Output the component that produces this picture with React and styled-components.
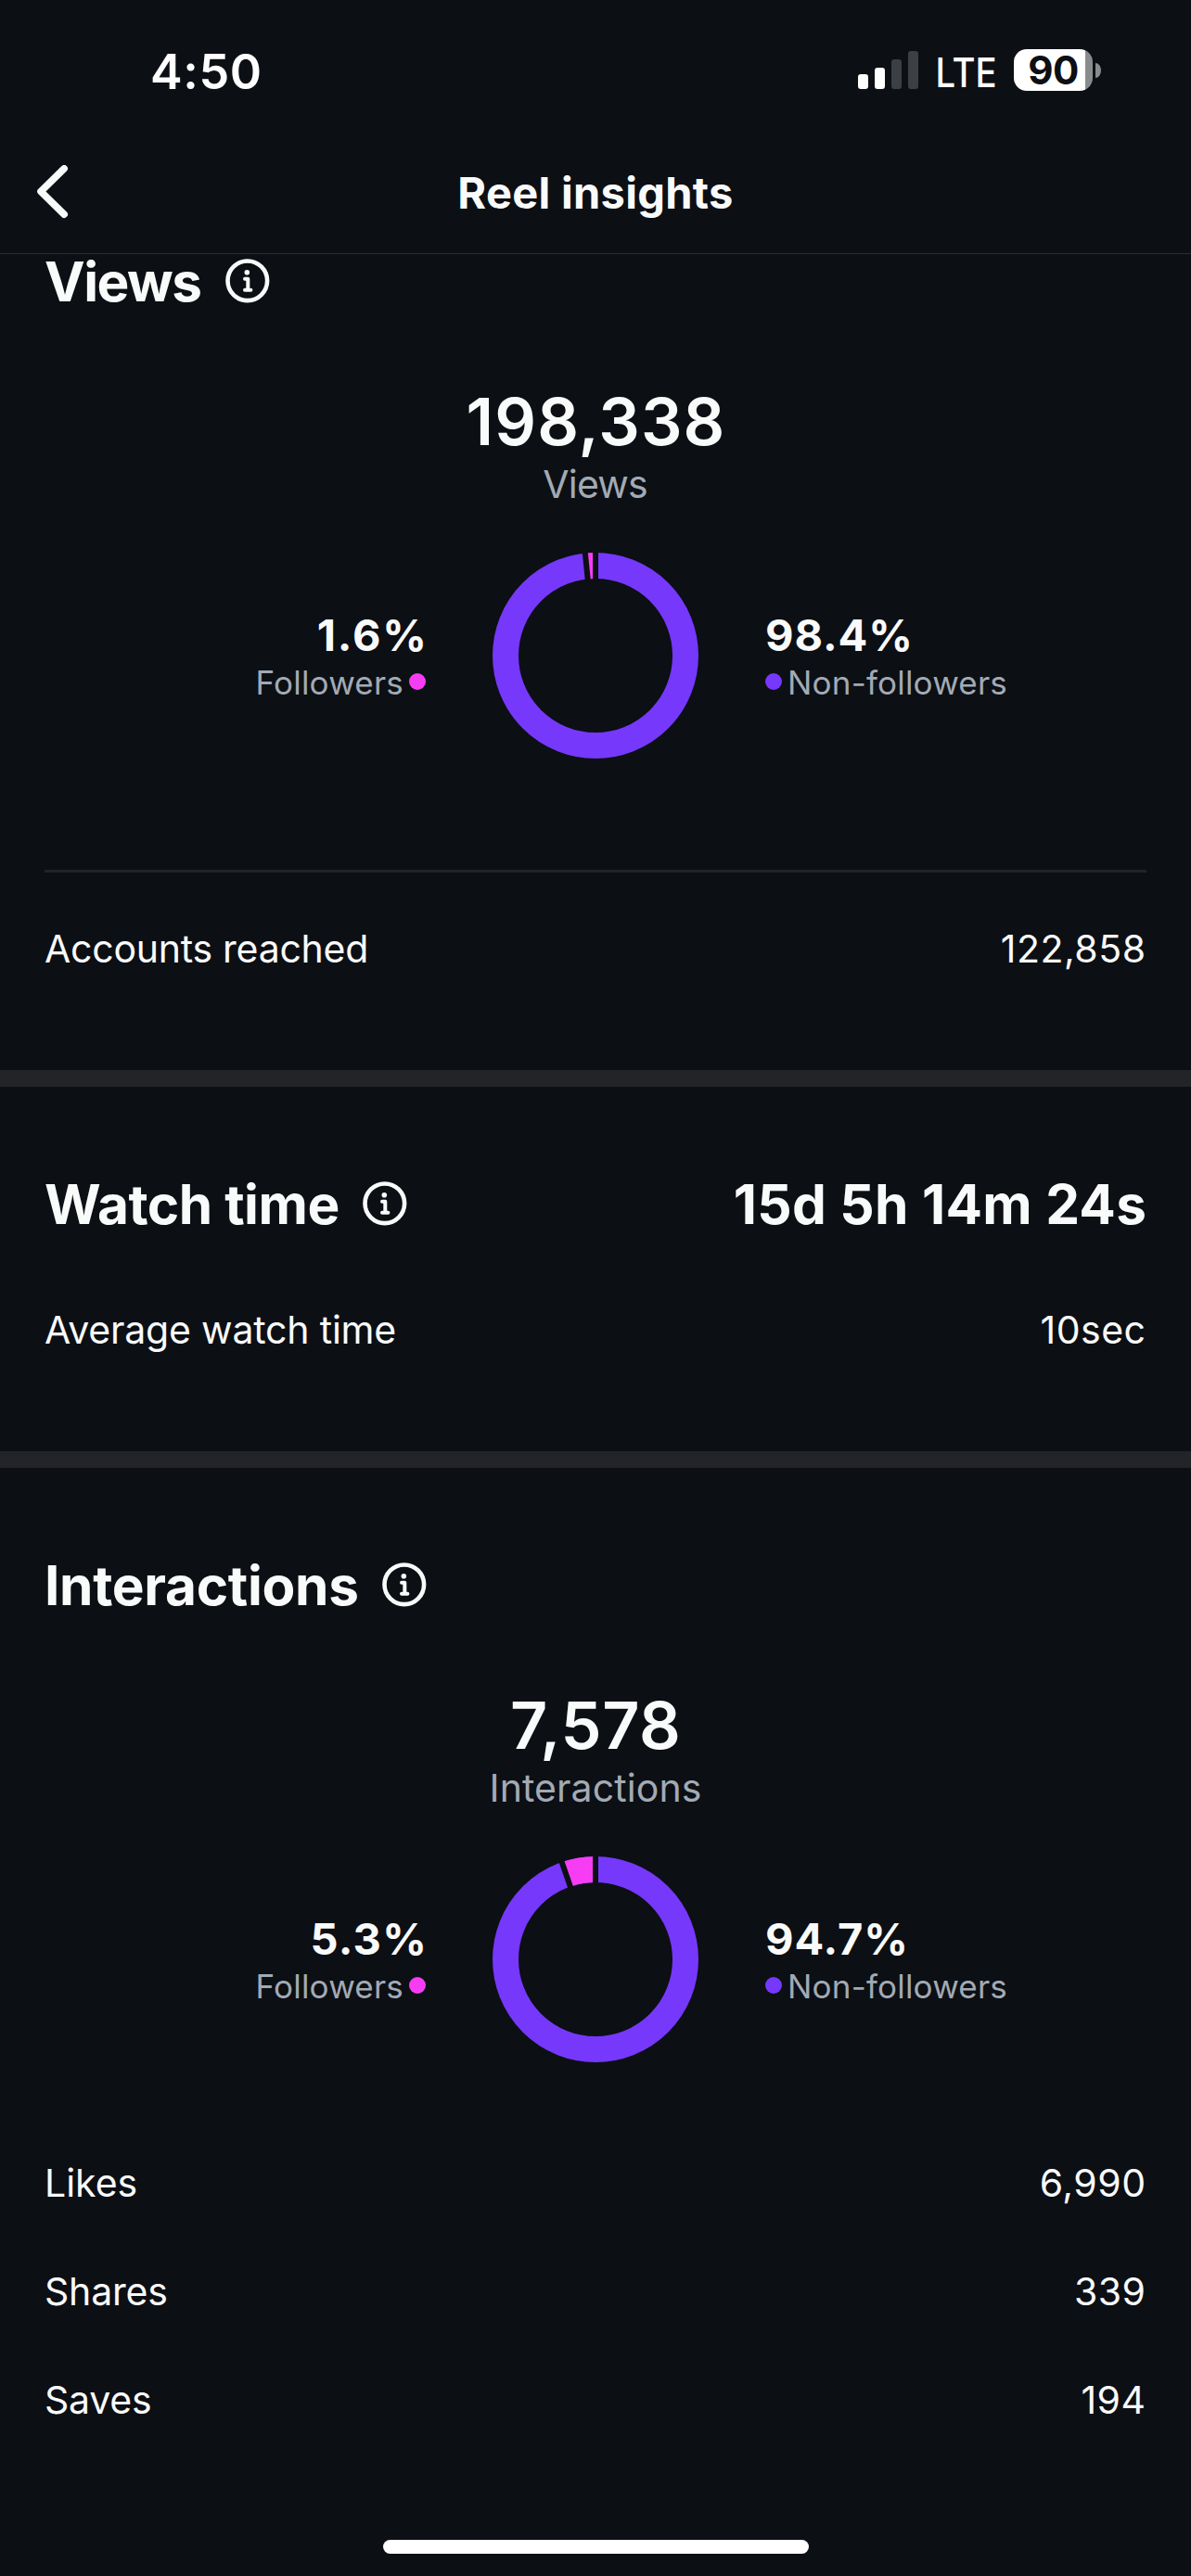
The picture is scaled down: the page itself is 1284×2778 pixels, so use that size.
import React from 'react';
import styled, { createGlobalStyle } from 'styled-components';

const colors = {
  background: '#0c0f14',
  text: '#f9fafa',
  muted: '#a2aab4',
  divider: '#232428',
  nonFollowers: '#7638fa',
  followers: '#f73df3',
};

const GlobalStyle = createGlobalStyle`
  * {
    box-sizing: border-box;
  }
  body {
    margin: 0;
    background: ${colors.background};
    color: ${colors.text};
    font-family: Inter, 'Liberation Sans', sans-serif;
  }
`;

const Screen = styled.div`
  width: 1284px;
  height: 2778px;
  overflow: hidden;
  background: ${colors.background};
`;

// letter-spacing without the trailing gap it leaves after the last glyph
const Tracked = styled.span`
  letter-spacing: ${({ $tracking }) => $tracking || 0}px;
  margin-right: ${({ $tracking }) => -($tracking || 0)}px;
  white-space: nowrap;
`;

/* status bar */

const StatusBar = styled.div`
  display: flex;
  align-items: center;
  height: 151px;
  padding: 0 97px 0 162px;
  color: #fff;
`;

const Time = styled.div`
  flex: 1;
  padding-top: 3px;
  font-size: 52px;
  font-weight: 600;
  letter-spacing: 0.6px;
`;

const Network = styled.div`
  width: 103px;
  padding-top: 5px;
  font-size: 44px;
  font-weight: 500;
  text-align: center;
  transform: scaleX(0.87);
`;

const Battery = styled.div`
  display: flex;
  align-items: center;
  gap: 3px;
`;

const BatteryBody = styled.div`
  display: flex;
  align-items: center;
  justify-content: center;
  width: 85px;
  height: 45px;
  border-radius: 14px;
  background: linear-gradient(to right, #fff 77px, #8a8b8d 77px);
  color: ${colors.background};
  font-size: 42px;
  font-weight: 700;
  letter-spacing: -0.5px;
`;

const BatteryTip = styled.div`
  width: 6px;
  height: 16px;
  border-radius: 0 6px 6px 0 / 0 8px 8px 0;
  background: #8a8b8d;
`;

/* navigation */

const NavBar = styled.header`
  display: grid;
  grid-template-columns: 1fr auto 1fr;
  align-items: center;
  height: 123px;
  padding: 0 39px 8px;
  border-bottom: 1px solid #2a2d31;
`;

const BackButton = styled.button`
  display: flex;
  justify-self: start;
  padding: 0;
  border: 0;
  background: none;
  color: inherit;
`;

const NavTitle = styled.h1`
  margin: 0 0 2px;
  font-size: 47px;
  font-weight: 700;
  letter-spacing: 0.3px;
`;

/* sections */

const Section = styled.section`
  padding: ${({ $first }) => ($first ? 0 : 97)}px 48px 72px;
  & + & {
    border-top: 18px solid ${colors.divider};
  }
`;

const SectionHeader = styled.div`
  display: flex;
  align-items: center;
  justify-content: space-between;
  height: 60px;
  padding-bottom: 2px;
  font-size: 58.5px;
  font-weight: 700;
`;

const SectionTitle = styled.h2`
  display: flex;
  align-items: center;
  gap: 25px;
  margin: 0;
  font-size: inherit;
`;

const Total = styled.div`
  margin-top: 79px;
  font-size: 70px;
  font-weight: 600;
  line-height: 84px;
  text-align: center;
`;

const TotalLabel = styled.div`
  margin-top: -1px;
  color: ${colors.muted};
  font-size: 41px;
  line-height: 52px;
  text-align: center;
`;

const Breakdown = styled.div`
  display: grid;
  grid-template-columns: 1fr 222px 1fr;
  align-items: center;
  column-gap: 72px;
  margin-top: 48px;
`;

const Share = styled.div`
  display: flex;
  flex-direction: column;
  align-items: ${({ $end }) => ($end ? 'flex-end' : 'flex-start')};
  margin-top: 2px;
`;

const Percent = styled.div`
  margin-right: -1px;
  font-size: 47px;
  font-weight: 700;
  line-height: 56px;
`;

const ShareLabel = styled.div`
  display: flex;
  align-items: center;
  gap: 6px;
  color: ${colors.muted};
  font-size: 35px;
  line-height: 46px;
  letter-spacing: 0.2px;
`;

const Dot = styled.span`
  width: 18px;
  height: 18px;
  margin-bottom: 2px;
  border-radius: 50%;
  background: ${({ $color }) => $color};
`;

const Divider = styled.hr`
  height: 3px;
  margin: 120px 0 0;
  border: 0;
  background: ${colors.divider};
`;

const Rows = styled.div`
  margin-top: ${({ $gap }) => $gap}px;
`;

const Row = styled.div`
  display: flex;
  align-items: center;
  justify-content: space-between;
  height: 117px;
  padding: 0 1px 2px 0;
  font-size: 41px;
`;

const HomeIndicator = styled.div`
  width: 459px;
  height: 15px;
  margin: 20px auto 0;
  border-radius: 8px;
  background: #fff;
`;

const SignalIcon = () => (
  <svg width="65" height="41" viewBox="0 0 65 41" fill="#fff">
    <rect x="0" y="25" width="11" height="16" rx="3" />
    <rect x="18" y="18" width="11" height="23" rx="3" />
    <rect x="36" y="9" width="11" height="32" rx="3" fill="#3c3f43" />
    <rect x="54" y="0" width="11" height="41" rx="3" fill="#3c3f43" />
  </svg>
);

const BackIcon = () => (
  <svg width="36" height="60" viewBox="0 0 36 60" fill="none" stroke="currentColor">
    <path d="M30.2 3.8 5 28.5l25.2 24.7" strokeWidth="7.6" strokeLinecap="round" strokeLinejoin="round" />
  </svg>
);

const InfoIcon = () => (
  <svg width="48" height="48" viewBox="0 0 48 48" fill="none" stroke="currentColor">
    <circle cx="23.8" cy="23.8" r="21.3" strokeWidth="4.6" />
    <circle cx="23.3" cy="14.7" r="2.8" fill="currentColor" stroke="none" />
    <path d="M21 21.7h3.3v12M21 33.8h6.4" strokeWidth="4" strokeLinecap="round" strokeLinejoin="round" />
  </svg>
);

// the ring starts at 12 o'clock and runs clockwise, followers take the last slice
const Donut = ({ followers }) => {
  const r = 97;
  const length = 2 * Math.PI * r;
  const slice = (length * followers) / 100;
  return (
    <svg width="222" height="222" viewBox="-111 -111 222 222" fill="none">
      <circle r={r} stroke={colors.nonFollowers} strokeWidth="28" />
      <circle
        r={r}
        stroke={colors.followers}
        strokeWidth="28"
        strokeDasharray={`${slice} ${length - slice}`}
        transform={`rotate(${-90 - followers * 3.6})`}
      />
      <g stroke={colors.background} strokeWidth="6">
        <path d="M0-80v-32" />
        <path d="M0-80v-32" transform={`rotate(${-followers * 3.6})`} />
      </g>
    </svg>
  );
};

const Heading = ({ title, tracking, children }) => (
  <SectionHeader>
    <SectionTitle>
      <Tracked $tracking={tracking}>{title}</Tracked>
      <InfoIcon />
    </SectionTitle>
    {children}
  </SectionHeader>
);

const Audience = ({ followers, trackings }) => (
  <Breakdown>
    <Share $end>
      <Percent>
        <Tracked $tracking={trackings[0]}>{followers.toFixed(1)}%</Tracked>
      </Percent>
      <ShareLabel>
        Followers
        <Dot $color={colors.followers} />
      </ShareLabel>
    </Share>
    <Donut followers={followers} />
    <Share>
      <Percent>
        <Tracked $tracking={trackings[1]}>{(100 - followers).toFixed(1)}%</Tracked>
      </Percent>
      <ShareLabel>
        <Dot $color={colors.nonFollowers} />
        Non-followers
      </ShareLabel>
    </Share>
  </Breakdown>
);

const Metric = ({ label, value, tracking = 0, valueTracking = 0.5 }) => (
  <Row>
    <Tracked $tracking={tracking}>{label}</Tracked>
    <Tracked $tracking={valueTracking}>{value}</Tracked>
  </Row>
);

const App = () => (
  <>
    <GlobalStyle />
    <Screen>
      <StatusBar>
        <Time>4:50</Time>
        <SignalIcon />
        <Network>LTE</Network>
        <Battery>
          <BatteryBody>90</BatteryBody>
          <BatteryTip />
        </Battery>
      </StatusBar>
      <NavBar>
        <BackButton aria-label="Back">
          <BackIcon />
        </BackButton>
        <NavTitle>Reel insights</NavTitle>
      </NavBar>

      <Section $first>
        <Heading title="Views" tracking={-1.5} />
        <Total>
          <Tracked $tracking={1.1}>198,338</Tracked>
        </Total>
        <TotalLabel>
          <Tracked $tracking={-0.8}>Views</Tracked>
        </TotalLabel>
        <Audience followers={1.6} trackings={[1.8, 0.9]} />
        <Divider />
        <Rows $gap={24}>
          <Metric label="Accounts reached" value="122,858" tracking={-0.25} valueTracking={0.5} />
        </Rows>
      </Section>

      <Section>
        <Heading title="Watch time" tracking={-0.45}>
          <Tracked $tracking={0.3}>15d 5h 14m 24s</Tracked>
        </Heading>
        <Rows $gap={47}>
          <Metric label="Average watch time" value="10sec" tracking={-0.2} />
        </Rows>
      </Section>

      <Section>
        <Heading title="Interactions" tracking={-0.3} />
        <Total>
          <Tracked $tracking={0.6}>7,578</Tracked>
        </Total>
        <TotalLabel>
          <Tracked $tracking={0.1}>Interactions</Tracked>
        </TotalLabel>
        <Audience followers={5.3} trackings={[1.3, 0.9]} />
        <Rows $gap={72}>
          <Metric label="Likes" value="6,990" />
          <Metric label="Shares" value="339" tracking={-0.2} />
          <Metric label="Saves" value="194" tracking={-0.2} />
        </Rows>
      </Section>
      <HomeIndicator />
    </Screen>
  </>
);

export default App;
